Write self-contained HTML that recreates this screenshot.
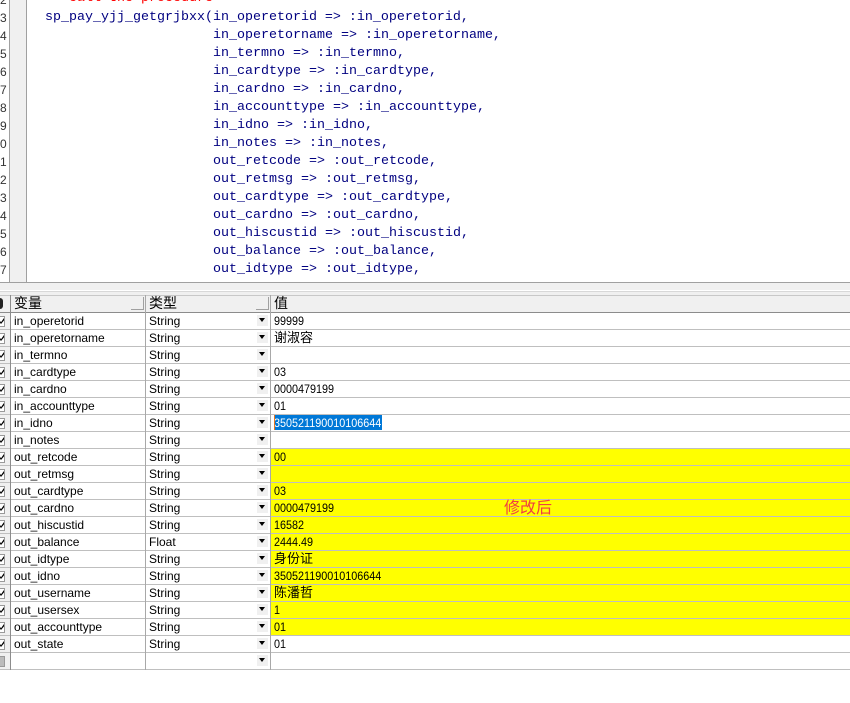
<!DOCTYPE html>
<html><head><meta charset="utf-8">
<style>
html,body{margin:0;padding:0;background:#fff;}
#p{position:relative;width:850px;height:703px;overflow:hidden;background:#fff;font-family:"Liberation Sans","Noto Sans CJK SC",sans-serif;font-size:12px;color:#000;}
.a{position:absolute;}
.c{position:absolute;font-family:"Liberation Mono",monospace;font-size:13.33px;line-height:18px;height:18px;white-space:pre;color:#000080;}
.n{position:absolute;left:0;width:8px;overflow:hidden;font-size:12px;line-height:18px;height:18px;color:#333;}
.h{position:absolute;left:0;right:0;height:1px;background:#bfbfbf;}
.t{position:absolute;line-height:17px;height:17px;white-space:nowrap;}
.v{transform:scaleX(.9);transform-origin:0 0;}
.d{position:absolute;left:257px;width:11px;height:11px;background:#f0f0f0;}
.d:after{content:"";position:absolute;left:2px;top:3px;border-left:3px solid transparent;border-right:3px solid transparent;border-top:4px solid #000;}
.k{position:absolute;left:0;width:4px;height:9px;border-right:1px solid #999;border-bottom:1px solid #999;border-top:1px solid #999;background:#fff;overflow:hidden;}
.k:after{content:"";position:absolute;left:0;top:1px;width:4px;height:6px;background:#000;clip-path:polygon(0 50%,25% 70%,100% 0,100% 40%,25% 100%,0 80%);}
.y{position:absolute;left:271px;right:0;height:16px;background:#ff0;}
</style></head><body><div id="p">
<div class="a" style="left:10px;top:0;width:16px;height:282px;background:#f0f0f0"></div>
<div class="a" style="left:9px;top:0;width:1px;height:282px;background:#a0a0a0"></div>
<div class="a" style="left:26px;top:0;width:1px;height:282px;background:#a0a0a0"></div>
<div class="n" style="top:-9px">2</div><div class="n" style="top:9px">3</div><div class="n" style="top:27px">4</div><div class="n" style="top:45px">5</div><div class="n" style="top:63px">6</div><div class="n" style="top:81px">7</div><div class="n" style="top:99px">8</div><div class="n" style="top:117px">9</div><div class="n" style="top:135px">0</div><div class="n" style="top:153px">1</div><div class="n" style="top:171px">2</div><div class="n" style="top:189px">3</div><div class="n" style="top:207px">4</div><div class="n" style="top:225px">5</div><div class="n" style="top:243px">6</div><div class="n" style="top:261px">7</div>
<div class="c" style="left:69px;top:-10px;color:#f00">call the procedure</div>
<div class="c" style="left:45px;top:9px">sp_pay_yjj_getgrjbxx(in_operetorid =&gt; :in_operetorid,</div>
<div class="c" style="left:213px;top:27px">in_operetorname =&gt; :in_operetorname,</div>
<div class="c" style="left:213px;top:45px">in_termno =&gt; :in_termno,</div>
<div class="c" style="left:213px;top:63px">in_cardtype =&gt; :in_cardtype,</div>
<div class="c" style="left:213px;top:81px">in_cardno =&gt; :in_cardno,</div>
<div class="c" style="left:213px;top:99px">in_accounttype =&gt; :in_accounttype,</div>
<div class="c" style="left:213px;top:117px">in_idno =&gt; :in_idno,</div>
<div class="c" style="left:213px;top:135px">in_notes =&gt; :in_notes,</div>
<div class="c" style="left:213px;top:153px">out_retcode =&gt; :out_retcode,</div>
<div class="c" style="left:213px;top:171px">out_retmsg =&gt; :out_retmsg,</div>
<div class="c" style="left:213px;top:189px">out_cardtype =&gt; :out_cardtype,</div>
<div class="c" style="left:213px;top:207px">out_cardno =&gt; :out_cardno,</div>
<div class="c" style="left:213px;top:225px">out_hiscustid =&gt; :out_hiscustid,</div>
<div class="c" style="left:213px;top:243px">out_balance =&gt; :out_balance,</div>
<div class="c" style="left:213px;top:261px">out_idtype =&gt; :out_idtype,</div>

<div class="a" style="left:0;right:0;top:282px;height:1px;background:#a0a0a0"></div>
<div class="a" style="left:0;right:0;top:283px;height:13px;background:#f0f0f0"></div>
<div class="a" style="left:0;right:0;top:290px;height:1px;background:#fff"></div>
<div class="a" style="left:0;right:0;top:291px;height:1px;background:#d8d8d8"></div>
<div class="a" style="left:0;right:0;top:295px;height:17px;background:#f0f0f0"></div>
<div class="a" style="left:0;right:0;top:295px;height:1px;background:#c8c8c8"></div>
<div class="a" style="left:0;right:0;top:312px;height:1px;background:#8c8c8c"></div>
<div class="a" style="left:0;top:298px;width:3px;height:11px;background:#222;border-radius:0 5px 5px 0"></div>
<div class="a" style="left:131px;top:297px;width:13px;height:13px;background:#f0f0f0;border-right:1px solid #a0a0a0;border-bottom:1px solid #a0a0a0;box-sizing:border-box"></div>
<div class="a" style="left:256px;top:297px;width:13px;height:13px;background:#f0f0f0;border-right:1px solid #a0a0a0;border-bottom:1px solid #a0a0a0;box-sizing:border-box"></div>
<div class="t" style="left:14px;top:295px;font-size:14px">变量</div>
<div class="t" style="left:149px;top:295px;font-size:14px">类型</div>
<div class="t" style="left:274px;top:295px;font-size:14px">值</div>

<div class="a" style="left:0;top:313px;width:10px;height:357px;background:#f0f0f0"></div>

<div class="y" style="top:449px"></div><div class="y" style="top:466px"></div><div class="y" style="top:483px"></div><div class="y" style="top:500px"></div><div class="y" style="top:517px"></div><div class="y" style="top:534px"></div><div class="y" style="top:551px"></div><div class="y" style="top:568px"></div><div class="y" style="top:585px"></div><div class="y" style="top:602px"></div><div class="y" style="top:619px"></div>

<div class="h" style="top:329px"></div><div class="h" style="top:346px"></div><div class="h" style="top:363px"></div><div class="h" style="top:380px"></div><div class="h" style="top:397px"></div><div class="h" style="top:414px"></div><div class="h" style="top:431px"></div><div class="h" style="top:448px"></div><div class="h" style="top:465px"></div><div class="h" style="top:482px"></div><div class="h" style="top:499px"></div><div class="h" style="top:516px"></div><div class="h" style="top:533px"></div><div class="h" style="top:550px"></div><div class="h" style="top:567px"></div><div class="h" style="top:584px"></div><div class="h" style="top:601px"></div><div class="h" style="top:618px"></div><div class="h" style="top:635px"></div><div class="h" style="top:652px"></div><div class="h" style="top:669px"></div>

<div class="a" style="left:10px;top:295px;width:1px;height:375px;background:#8c8c8c"></div>
<div class="a" style="left:145px;top:295px;width:1px;height:375px;background:#a8a8a8"></div>
<div class="a" style="left:270px;top:295px;width:1px;height:375px;background:#a8a8a8"></div>

<div class="k" style="top:316px"></div><div class="k" style="top:333px"></div><div class="k" style="top:350px"></div><div class="k" style="top:367px"></div><div class="k" style="top:384px"></div><div class="k" style="top:401px"></div><div class="k" style="top:418px"></div><div class="k" style="top:435px"></div><div class="k" style="top:452px"></div><div class="k" style="top:469px"></div><div class="k" style="top:486px"></div><div class="k" style="top:503px"></div><div class="k" style="top:520px"></div><div class="k" style="top:537px"></div><div class="k" style="top:554px"></div><div class="k" style="top:571px"></div><div class="k" style="top:588px"></div><div class="k" style="top:605px"></div><div class="k" style="top:622px"></div><div class="k" style="top:639px"></div>
<div class="a" style="left:0;top:656px;width:4px;height:9px;background:#bbb;border-right:1px solid #999;border-top:1px solid #999;border-bottom:1px solid #999"></div>

<div class="d" style="top:315px"></div><div class="d" style="top:332px"></div><div class="d" style="top:349px"></div><div class="d" style="top:366px"></div><div class="d" style="top:383px"></div><div class="d" style="top:400px"></div><div class="d" style="top:417px"></div><div class="d" style="top:434px"></div><div class="d" style="top:451px"></div><div class="d" style="top:468px"></div><div class="d" style="top:485px"></div><div class="d" style="top:502px"></div><div class="d" style="top:519px"></div><div class="d" style="top:536px"></div><div class="d" style="top:553px"></div><div class="d" style="top:570px"></div><div class="d" style="top:587px"></div><div class="d" style="top:604px"></div><div class="d" style="top:621px"></div><div class="d" style="top:638px"></div><div class="d" style="top:655px"></div>

<div class="t" style="left:14px;top:313px">in_operetorid</div><div class="t" style="left:149px;top:313px">String</div><div class="t v" style="left:274px;top:313px">99999</div>
<div class="t" style="left:14px;top:330px">in_operetorname</div><div class="t" style="left:149px;top:330px">String</div><div class="t" style="left:274px;top:329px;font-size:13px">谢淑容</div>
<div class="t" style="left:14px;top:347px">in_termno</div><div class="t" style="left:149px;top:347px">String</div>
<div class="t" style="left:14px;top:364px">in_cardtype</div><div class="t" style="left:149px;top:364px">String</div><div class="t v" style="left:274px;top:364px">03</div>
<div class="t" style="left:14px;top:381px">in_cardno</div><div class="t" style="left:149px;top:381px">String</div><div class="t v" style="left:274px;top:381px">0000479199</div>
<div class="t" style="left:14px;top:398px">in_accounttype</div><div class="t" style="left:149px;top:398px">String</div><div class="t v" style="left:274px;top:398px">01</div>
<div class="t" style="left:14px;top:415px">in_idno</div><div class="t" style="left:149px;top:415px">String</div>
<div class="a" style="left:274px;top:415px;width:108px;height:15px;background:#0078d7"></div>
<div class="t v" style="left:274px;top:415px;color:#fff">350521190010106644</div>
<div class="a" style="left:274px;top:415px;width:1px;height:15px;background:#e87722"></div>
<div class="t" style="left:14px;top:432px">in_notes</div><div class="t" style="left:149px;top:432px">String</div>
<div class="t" style="left:14px;top:449px">out_retcode</div><div class="t" style="left:149px;top:449px">String</div><div class="t v" style="left:274px;top:449px">00</div>
<div class="t" style="left:14px;top:466px">out_retmsg</div><div class="t" style="left:149px;top:466px">String</div>
<div class="t" style="left:14px;top:483px">out_cardtype</div><div class="t" style="left:149px;top:483px">String</div><div class="t v" style="left:274px;top:483px">03</div>
<div class="t" style="left:14px;top:500px">out_cardno</div><div class="t" style="left:149px;top:500px">String</div><div class="t v" style="left:274px;top:500px">0000479199</div>
<div class="t" style="left:14px;top:517px">out_hiscustid</div><div class="t" style="left:149px;top:517px">String</div><div class="t v" style="left:274px;top:517px">16582</div>
<div class="t" style="left:14px;top:534px">out_balance</div><div class="t" style="left:149px;top:534px">Float</div><div class="t v" style="left:274px;top:534px">2444.49</div>
<div class="t" style="left:14px;top:551px">out_idtype</div><div class="t" style="left:149px;top:551px">String</div><div class="t" style="left:274px;top:550px;font-size:13px">身份证</div>
<div class="t" style="left:14px;top:568px">out_idno</div><div class="t" style="left:149px;top:568px">String</div><div class="t v" style="left:274px;top:568px">350521190010106644</div>
<div class="t" style="left:14px;top:585px">out_username</div><div class="t" style="left:149px;top:585px">String</div><div class="t" style="left:274px;top:584px;font-size:13px">陈潘哲</div>
<div class="t" style="left:14px;top:602px">out_usersex</div><div class="t" style="left:149px;top:602px">String</div><div class="t v" style="left:274px;top:602px">1</div>
<div class="t" style="left:14px;top:619px">out_accounttype</div><div class="t" style="left:149px;top:619px">String</div><div class="t v" style="left:274px;top:619px">01</div>
<div class="t" style="left:14px;top:636px">out_state</div><div class="t" style="left:149px;top:636px">String</div><div class="t v" style="left:274px;top:636px">01</div>
<div class="a" style="left:504px;top:499px;font-size:16px;line-height:20px;color:#f04040;white-space:nowrap">修改后</div>
</div></body></html>
